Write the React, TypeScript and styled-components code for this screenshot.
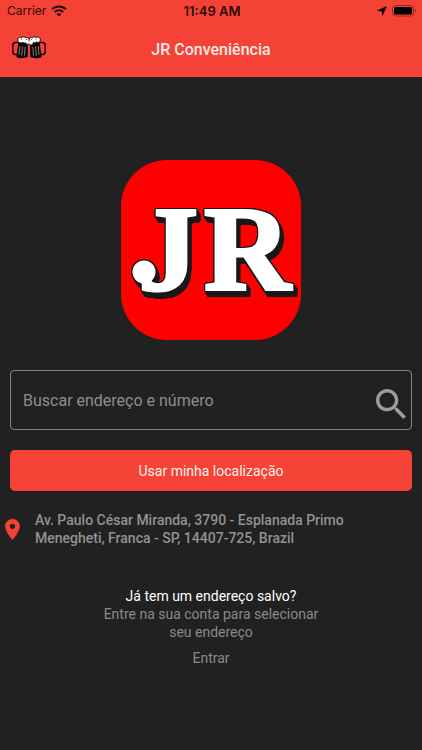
import React from "react";
import styled, { createGlobalStyle } from "styled-components";

const GlobalStyle = createGlobalStyle`
  * { box-sizing: border-box; }
  body {
    margin: 0;
    background: #212121;
    font-family: Roboto, "Liberation Sans", sans-serif;
  }
  button, input { font-family: inherit; }
`;

const Screen = styled.div`
  min-height: 100vh;
  background: #212121;
  color: #999;
`;

const Header = styled.header`
  background: #f44336;
  border-bottom: 1px solid #33201f;
`;

const StatusBar = styled.div`
  display: grid;
  grid-template-columns: 1fr auto 1fr;
  align-items: center;
  height: 22px;
  padding: 0 5px 0 7px;
  color: #2b0b08;
  font-family: Inter, sans-serif;
  font-size: 12px;
  line-height: 22px;
`;

const StatusGroup = styled.div<{ $end?: boolean }>`
  display: flex;
  align-items: center;
  gap: 5px;
  justify-content: ${(p) => (p.$end ? "flex-end" : "flex-start")};
`;

const Clock = styled.time`
  font-size: 13px;
  font-weight: 600;
`;

const NavBar = styled.div`
  display: grid;
  grid-template-columns: 1fr auto 1fr;
  align-items: center;
  height: 55px;
  padding: 0 12px;
`;

const MenuButton = styled.button`
  justify-self: start;
  display: flex;
  padding: 0 0 4px;
  border: 0;
  background: none;
  cursor: pointer;
`;

const Title = styled.h1`
  margin: 0;
  color: #ffe9e7;
  font-size: 16px;
  font-weight: 500;
  line-height: 20px;
`;

const Content = styled.main`
  display: flex;
  flex-direction: column;
  padding: 82px 10px 0;
`;

const Logo = styled.svg`
  align-self: center;
  width: 180px;
  height: 180px;
`;

const Lettering = styled.g`
  fill: #fff;
  stroke: #fff;
  stroke-width: 3px;
  font-family: "Liberation Serif", serif;
  font-size: 120px;
  font-weight: 700;
  filter: drop-shadow(-1px 0 0 #181818) drop-shadow(1px 0 0 #181818)
    drop-shadow(0 -1px 0 #181818) drop-shadow(0 1px 0 #181818)
    drop-shadow(2px 3px 0 #181818) drop-shadow(1px 2px 0 #181818);
`;

const SearchBox = styled.form`
  display: flex;
  align-items: center;
  height: 60px;
  margin-top: 30px;
  padding: 0 5px 0 12px;
  border: 1px solid #858585;
  border-radius: 4px;
`;

const SearchInput = styled.input`
  flex: 1;
  min-width: 0;
  padding: 2px 0 0;
  border: 0;
  outline: 0;
  background: none;
  color: #999;
  font-size: 16px;
  line-height: 20px;
  &::placeholder { color: #8e8e8e; opacity: 1; }
`;

const IconButton = styled.button`
  display: flex;
  padding: 8px 0 0;
  border: 0;
  background: none;
  color: #9b9b9b;
  cursor: pointer;
`;

const PrimaryButton = styled.button`
  height: 41px;
  margin-top: 20px;
  padding: 0;
  border: 0;
  border-radius: 5px;
  background: #f44336;
  color: #fff0ee;
  font-size: 14px;
  line-height: 18px;
  cursor: pointer;
`;

const AddressRow = styled.address`
  display: flex;
  align-items: center;
  gap: 15px;
  margin: 20px 0 0 -5px;
  font-size: 14px;
  font-style: normal;
  font-weight: 500;
  line-height: 18px;
  color: #929292;
`;

const AddressText = styled.span`
  max-width: 330px;
`;

const Account = styled.section`
  display: flex;
  flex-direction: column;
  align-items: center;
  margin-top: 40px;
  font-size: 14px;
  line-height: 18px;
  text-align: center;
`;

const Question = styled.p`
  margin: 0;
  color: #fff;
`;

const Hint = styled.p`
  max-width: 230px;
  margin: 0;
  color: #8a8a8a;
`;

const LoginLink = styled.a`
  margin-top: 8px;
  color: #8a8a8a;
  text-decoration: none;
`;

const WifiIcon = () => (
  <svg width="16" height="12" viewBox="0 0 16 12" fill="none" stroke="#2b0b08" strokeWidth="2" aria-hidden="true">
    <path d="M1 4.4a10 10 0 0 1 14 0" />
    <path d="M3.7 7.1a6.2 6.2 0 0 1 8.6 0" />
    <path d="M8 11.6 5.6 9.2a3.4 3.4 0 0 1 4.8 0z" fill="#2b0b08" stroke="none" />
  </svg>
);

const LocationArrow = () => (
  <svg width="10" height="10" viewBox="0 0 10 10" aria-hidden="true">
    <path d="M9.6.4 5.4 9.6 5 5 .4 4.6z" fill="#000" stroke="#000" strokeWidth=".4" />
  </svg>
);

const BatteryIcon = () => (
  <svg width="25" height="12" viewBox="0 0 25 12" aria-hidden="true">
    <rect x=".5" y=".5" width="21" height="10.5" rx="3" fill="none" stroke="#8f2a22" />
    <rect x="2" y="2" width="18" height="7.5" rx="1.5" />
    <path d="M23 4v3.6c1.6-.5 1.6-3.1 0-3.6z" fill="#8f2a22" />
  </svg>
);

const BeerIcon = () => (
  <svg width="34" height="23" viewBox="0 0 34 23" aria-hidden="true">
    <g fill="none" stroke="#170504" strokeWidth="1.5">
      <path d="M7 6.5H3.3Q1 6.5 .9 9L.8 15.5Q.8 18.5 3.4 18.5H5.5" />
      <path d="M27 6.5h3.7q2.3 0 2.4 2.5l.1 6.500q0 3-2.600 3H28.500" />
    </g>
    <path d="M6.500 5 16 7.500 15.800 21q-5.500 2.200-11.300.2z" fill="#0b0404" />
    <path d="M27.500 5 18 7.500 18.200 21q5.500 2.200 11.300.2z" fill="#0b0404" />
    <g stroke="#a59d9c" strokeWidth=".8">
      <path d="M7.900 10 6.900 19M10.400 10.500 9.700 19.800M13.100 11l-.6 8.500" />
      <path d="M26.100 10l1 9M23.600 10.500l.7 9.300M20.900 11l.6 8.500" />
    </g>
    <path
      d="M6 5.200C5 2.300 7.500.4 9.700 1.500 11 .4 12.700.7 13.500 1.800c1.600-.8 3.100 0 3.500 1.400.5-1.400 2-2 3.300-1.400 1-1.400 2.700-1.400 3.700-.4 2.300-1.300 5 .5 4.200 3.500-.5 1.700-2.600 2-3.600 1-.8 1-2.200 1.200-3.100.5-.6 3-3.500 3.300-4.500 1.300-.8 1.300-2.700.8-3-.8-1.100.6-2.400.3-3-.6C9.600 7.500 6.500 7.200 6 5.200z"
      fill="#fff"
      stroke="#170504"
      strokeWidth="1"
    />
    <path d="M9 2.800l1 .8M14 3l.8 1M17 3v2.500M19.800 3.200l-.8 1M24.700 2.600l-.8 1" stroke="#170504" strokeWidth=".8" />
  </svg>
);

const SearchIcon = () => (
  <svg width="30" height="30" viewBox="3 3 17.500 17.500" fill="currentColor" aria-hidden="true">
    <path d="M15.500 14h-.79l-.28-.27C15.410 12.590 16 11.110 16 9.500 16 5.910 13.090 3 9.500 3S3 5.910 3 9.500 5.910 16 9.500 16c1.610 0 3.090-.59 4.230-1.570l.27.28v.79l5 4.990L20.490 19l-4.990-5zm-6 0C7.010 14 5 11.990 5 9.500S7.010 5 9.500 5 14 7.010 14 9.500 11.990 14 9.500 14z" />
  </svg>
);

const PinIcon = () => (
  <svg width="15" height="21" viewBox="5 2 14 20" fill="#f44336" aria-hidden="true">
    <path d="M12 2C8.130 2 5 5.130 5 9c0 5.250 7 13 7 13s7-7.750 7-13c0-3.870-3.130-7-7-7zm0 9.500a2.500 2.500 0 0 1 0-5 2.500 2.500 0 0 1 0 5z" />
  </svg>
);

const BrandLogo = () => (
  <Logo viewBox="0 0 180 180" role="img" aria-label="JR">
    <rect width="180" height="180" rx="46" fill="#f00" />
    <Lettering>
      <text x="17" y="130">J</text>
      <text x="83" y="130">R</text>
      <circle cx="23" cy="112" r="10" />
    </Lettering>
  </Logo>
);

export default function App() {
  return (
    <Screen>
      <GlobalStyle />
      <Header>
        <StatusBar>
          <StatusGroup>
            <span>Carrier</span>
            <WifiIcon />
          </StatusGroup>
          <Clock>11:49 AM</Clock>
          <StatusGroup $end>
            <LocationArrow />
            <BatteryIcon />
          </StatusGroup>
        </StatusBar>
        <NavBar>
          <MenuButton type="button" aria-label="Bebidas">
            <BeerIcon />
          </MenuButton>
          <Title>JR Conveniência</Title>
        </NavBar>
      </Header>
      <Content>
        <BrandLogo />
        <SearchBox role="search" onSubmit={(e) => e.preventDefault()}>
          <SearchInput
            type="text"
            aria-label="Buscar endereço e número"
            placeholder="Buscar endereço e número"
          />
          <IconButton type="submit" aria-label="Buscar">
            <SearchIcon />
          </IconButton>
        </SearchBox>
        <PrimaryButton type="button">Usar minha localização</PrimaryButton>
        <AddressRow>
          <PinIcon />
          <AddressText>
            Av. Paulo César Miranda, 3790 - Esplanada Primo Menegheti, Franca - SP, 14407-725, Brazil
          </AddressText>
        </AddressRow>
        <Account>
          <Question>Já tem um endereço salvo?</Question>
          <Hint>Entre na sua conta para selecionar seu endereço</Hint>
          <LoginLink href="#entrar">Entrar</LoginLink>
        </Account>
      </Content>
    </Screen>
  );
}
